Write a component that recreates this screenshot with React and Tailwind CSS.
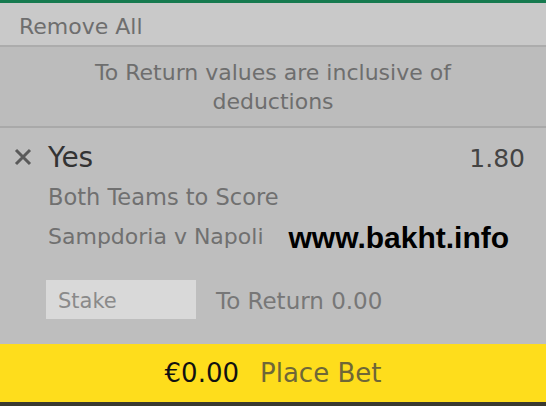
const BetSlip = () => {
  return (
    <div className="w-[546px] h-[406px] flex flex-col bg-[#bdbdbd] font-['DejaVu_Sans',sans-serif] overflow-hidden">
      <div className="h-[3px] bg-[#167a4f]" />
      <div className="h-[44px] bg-[#c9c9c9] flex items-center px-[19px] pt-[5px] text-[22px] leading-none text-[#6e6e6e] border-b-2 border-[#acacac]">
        Remove All
      </div>
      <div className="h-[81px] bg-[#bcbcbc] flex items-center justify-center text-center text-[22px] leading-[29px] text-[#6e6e6e] border-b-2 border-[#a9a9a9]">
        <p>To Return values are inclusive of<br />deductions</p>
      </div>
      <div className="flex-1 bg-[#bebebe] flex flex-col">
        <div className="flex items-center h-[28px] pl-[14px] pr-[21px] mt-[16px]">
          <svg width="18" height="18" viewBox="0 0 18 18" className="mr-[16px] -mt-[2px]">
            <path d="M2 2 L16 16 M16 2 L2 16" stroke="#5a5a5a" strokeWidth="3" />
          </svg>
          <span className="flex-1 text-[28px] leading-none text-[#333]">Yes</span>
          <span className="text-[25px] leading-none text-[#444]">1.80</span>
        </div>
        <div className="pl-[48px] mt-[12px] h-[26px] leading-[26px] text-[22.5px] text-[#707070]">Both Teams to Score</div>
        <div className="pl-[48px] mt-[14px] h-[26px] flex items-center">
          <span className="text-[22px] leading-none text-[#707070]">Sampdoria v Napoli</span>
          <span className="ml-[25px] mt-[2px] text-[30px] leading-none font-bold text-black font-['Liberation_Sans',sans-serif]">www.bakht.info</span>
        </div>
        <div className="pl-[46px] mt-[30px] flex items-center">
          <div className="w-[150px] h-[39px] bg-[#d9d9d9] flex items-center px-[12px] pt-[4px] text-[21px] leading-none text-[#8a8a8a]">Stake</div>
          <span className="ml-[20px] mt-[4px] text-[23px] leading-none text-[#777]">To Return 0.00</span>
        </div>
      </div>
      <div className="h-[58px] bg-[#fedd1c] flex items-center justify-center gap-[21px] text-[26px] leading-none">
        <span className="text-[#111]">€0.00</span>
        <span className="text-[#6f6737]">Place Bet</span>
      </div>
      <div className="h-[4px] bg-[#3a3a30]" />
    </div>
  );
};

export default BetSlip;
